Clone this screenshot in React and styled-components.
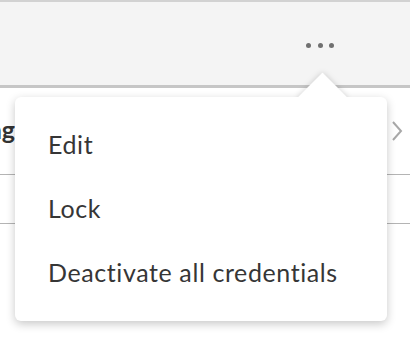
import React from "react";
import styled, { createGlobalStyle } from "styled-components";

const Global = createGlobalStyle`
  html, body { margin: 0; padding: 0; background: #ffffff; }
  body { font-family: "Lato", "Open Sans", sans-serif; color: #333; overflow: hidden; }
`;

const Page = styled.div`
  position: relative;
  width: 410px;
  height: 340px;
  overflow: hidden;
`;

const Header = styled.div`
  height: 88px;
  border-top: 2px solid #d2d2d2;
  border-bottom: 3px solid #c6c6c6;
  background: #f4f4f4;
  display: flex;
  align-items: center;
  justify-content: flex-end;
  padding: 3px 76px 0 0;
  box-sizing: border-box;
`;

const MoreButton = styled.button`
  display: flex;
  gap: 6.5px;
  background: none;
  border: none;
  padding: 0;
  cursor: pointer;
`;

const Dot = styled.span`
  width: 5px;
  height: 5px;
  border-radius: 50%;
  background: #707070;
`;

const Row = styled.div`
  display: flex;
  align-items: center;
  justify-content: space-between;
  height: ${(p) => p.$h}px;
  border-bottom: 1px solid #b4b4b4;
  box-sizing: border-box;
`;

const NameCell = styled.div`
  width: 15px;
  overflow: hidden;
  display: flex;
  justify-content: flex-end;
  white-space: nowrap;
  font-weight: 700;
  font-size: 25px;
  color: #333;
  padding-bottom: 4px;
`;

const Chevron = styled.svg`
  width: 12px;
  height: 20px;
  margin-right: 7px;
`;

const Popover = styled.div`
  position: absolute;
  left: 15px;
  top: 97px;
  width: 372px;
`;

const ArrowBase = styled.div`
  position: absolute;
  width: 35px;
  height: 35px;
  left: 289.5px;
  top: -17.5px;
  background: #fff;
  transform: rotate(45deg);
  box-shadow: ${(p) => (p.$shadow ? "0 0 6px rgba(0,0,0,0.18)" : "none")};
  z-index: ${(p) => (p.$shadow ? 0 : 2)};
`;

const Menu = styled.ul`
  position: relative;
  z-index: 1;
  list-style: none;
  margin: 0;
  padding: 15px 0 17px;
  background: #fff;
  border-radius: 6px;
  box-shadow: 0 3px 10px rgba(0, 0, 0, 0.22);
`;

const Item = styled.li`
  height: 64px;
  line-height: 64px;
  padding-left: 33px;
  font-size: 25px;
  letter-spacing: 0.6px;
  color: #363636;
  white-space: nowrap;
`;

export default function App() {
  return (
    <Page>
      <Global />
      <Header>
        <MoreButton aria-label="More actions">
          <Dot />
          <Dot />
          <Dot />
        </MoreButton>
      </Header>
      <Row $h={87}>
        <NameCell>Staging</NameCell>
        <Chevron viewBox="0 0 12 20">
          <polyline points="2,1 10,10 2,19" fill="none" stroke="#a8a8a8" strokeWidth="2" />
        </Chevron>
      </Row>
      <Row $h={49} />
      <Popover>
        <ArrowBase $shadow />
        <Menu>
          <Item>Edit</Item>
          <Item>Lock</Item>
          <Item>Deactivate all credentials</Item>
        </Menu>
        <ArrowBase />
      </Popover>
    </Page>
  );
}
